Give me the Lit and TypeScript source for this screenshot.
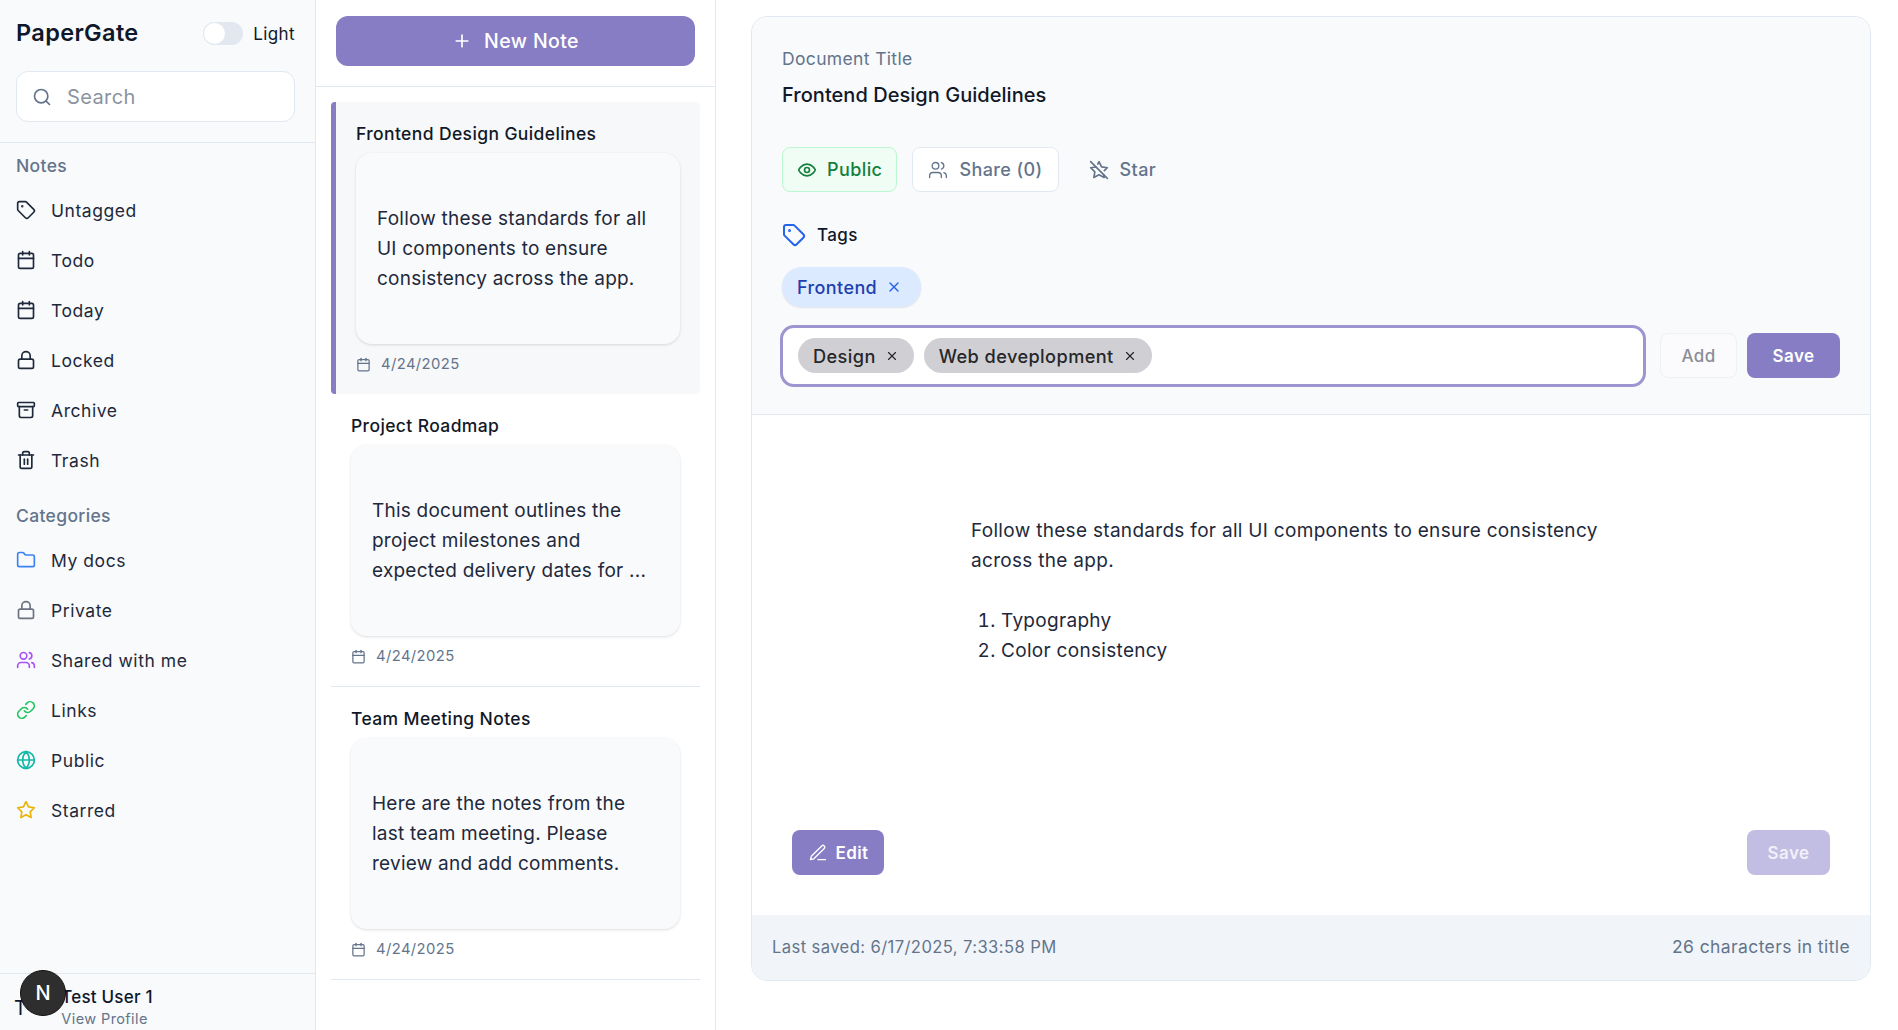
import { LitElement, html, css, svg } from "lit";
import { customElement } from "lit/decorators.js";

// lucide shapes, 24 box
const ICONS: Record<string, unknown> = {
  tag: svg`<path d="M12.586 2.586A2 2 0 0 0 11.172 2H4a2 2 0 0 0-2 2v7.172a2 2 0 0 0 .586 1.414l8.704 8.704a2.426 2.426 0 0 0 3.42 0l6.58-6.58a2.426 2.426 0 0 0 0-3.42z"/><circle cx="7.5" cy="7.5" r=".5" fill="currentColor"/>`,
  calendar: svg`<path d="M8 2v4"/><path d="M16 2v4"/><rect x="3" y="4" width="18" height="18" rx="2"/><path d="M3 10h18"/>`,
  lock: svg`<rect x="3" y="11" width="18" height="11" rx="2"/><path d="M7 11V7a5 5 0 0 1 10 0v4"/>`,
  archive: svg`<rect x="2" y="3" width="20" height="5" rx="1"/><path d="M4 8v11a2 2 0 0 0 2 2h12a2 2 0 0 0 2-2V8"/><path d="M10 12h4"/>`,
  trash: svg`<path d="M3 6h18"/><path d="M19 6v14c0 1-1 2-2 2H7c-1 0-2-1-2-2V6"/><path d="M8 6V4c0-1 1-2 2-2h4c1 0 2 1 2 2v2"/><path d="M10 11v6"/><path d="M14 11v6"/>`,
  folder: svg`<path d="M20 20a2 2 0 0 0 2-2V8a2 2 0 0 0-2-2h-7.9a2 2 0 0 1-1.69-.9L9.6 3.9A2 2 0 0 0 7.93 3H4a2 2 0 0 0-2 2v13a2 2 0 0 0 2 2Z"/>`,
  users: svg`<path d="M16 21v-2a4 4 0 0 0-4-4H6a4 4 0 0 0-4 4v2"/><circle cx="9" cy="7" r="4"/><path d="M22 21v-2a4 4 0 0 0-3-3.87"/><path d="M16 3.13a4 4 0 0 1 0 7.75"/>`,
  link: svg`<path d="M10 13a5 5 0 0 0 7.54.54l3-3a5 5 0 0 0-7.07-7.07l-1.72 1.71"/><path d="M14 11a5 5 0 0 0-7.54-.54l-3 3a5 5 0 0 0 7.07 7.07l1.71-1.71"/>`,
  globe: svg`<circle cx="12" cy="12" r="10"/><path d="M12 2a14.5 14.5 0 0 0 0 20 14.5 14.5 0 0 0 0-20"/><path d="M2 12h20"/>`,
  star: svg`<polygon points="12 2 15.09 8.26 22 9.27 17 14.14 18.18 21.02 12 17.77 5.82 21.02 7 14.14 2 9.27 8.91 8.26 12 2"/>`,
  starOff: svg`<path d="M8.34 8.34 2 9.27l5 4.87L5.82 21 12 17.77 18.18 21l-.59-3.43"/><path d="M18.42 12.76 22 9.27l-6.91-1L12 2l-1.44 2.91"/><path d="M2 2l20 20"/>`,
  eye: svg`<path d="M2 12s3-7 10-7 10 7 10 7-3 7-10 7-10-7-10-7Z"/><circle cx="12" cy="12" r="3"/>`,
  search: svg`<circle cx="11" cy="11" r="8"/><path d="m21 21-4.3-4.3"/>`,
  plus: svg`<path d="M5 12h14"/><path d="M12 5v14"/>`,
  x: svg`<path d="M18 6 6 18"/><path d="m6 6 12 12"/>`,
  pen: svg`<path d="M12 20h9"/><path d="M16.5 3.5a2.12 2.12 0 0 1 3 3L7 19l-4 1 1-4Z"/>`,
};

const icon = (name: string, size = 20, sw = 2) => html`<svg
  class="ic"
  width=${size}
  height=${size}
  viewBox="0 0 24 24"
  fill="none"
  stroke="currentColor"
  stroke-width=${sw}
  stroke-linecap="round"
  stroke-linejoin="round"
>${ICONS[name]}</svg>`;

const NOTE_LINKS = [
  { label: "Untagged", icon: "tag" },
  { label: "Todo", icon: "calendar" },
  { label: "Today", icon: "calendar" },
  { label: "Locked", icon: "lock" },
  { label: "Archive", icon: "archive" },
  { label: "Trash", icon: "trash" },
];

const CATEGORIES = [
  { label: "My docs", icon: "folder", color: "#3b82f6" },
  { label: "Private", icon: "lock", color: "#6b7280" },
  { label: "Shared with me", icon: "users", color: "#a855f7" },
  { label: "Links", icon: "link", color: "#22c55e" },
  { label: "Public", icon: "globe", color: "#14b8a6" },
  { label: "Starred", icon: "star", color: "#eab308" },
];

const NOTES = [
  {
    title: "Frontend Design Guidelines",
    lines: ["Follow these standards for all", "UI components to ensure", "consistency across the app."],
    selected: true,
  },
  {
    title: "Project Roadmap",
    lines: ["This document outlines the", "project milestones and", "expected delivery dates for ..."],
  },
  {
    title: "Team Meeting Notes",
    lines: ["Here are the notes from the", "last team meeting. Please", "review and add comments."],
  },
];

@customElement("app-root")
export class AppRoot extends LitElement {
  static styles = css`
    :host {
      display: flex;
      height: 100vh;
      overflow: hidden;
      background: #fff;
      color: #0f172a;
      font-family: Inter, "Noto Sans", sans-serif;
      letter-spacing: 0.025em;
    }
    .ic {
      display: block;
      flex: none;
    }

    /* sidebar */
    .side {
      width: 315px;
      flex: none;
      display: flex;
      flex-direction: column;
      background: #f8fafc;
      border-right: 1px solid #e2e8f0;
      position: relative;
    }
    .side-top {
      padding: 22px 20px 20px 16px;
      border-bottom: 1px solid #e2e8f0;
    }
    .brand-row {
      display: flex;
      align-items: center;
      height: 23px;
      margin-bottom: 26px;
    }
    .brand {
      font-size: 23.5px;
      font-weight: 600;
      letter-spacing: 0.015em;
      flex: 1;
      padding-bottom: 2px;
    }
    .toggle {
      width: 40px;
      height: 23px;
      border-radius: 12px;
      background: #e2e8f0;
      position: relative;
      margin-right: 10px;
    }
    .toggle::after {
      content: "";
      position: absolute;
      left: 1px;
      top: 1px;
      width: 21px;
      height: 21px;
      border-radius: 50%;
      background: #fff;
    }
    .light {
      font-size: 17px;
    }
    .search {
      height: 51px;
      box-sizing: border-box;
      border: 1px solid #e2e8f0;
      border-radius: 12px;
      background: #fff;
      display: flex;
      align-items: center;
      gap: 15px;
      padding: 0 15px;
      color: #64748b;
      font-size: 20px;
    }
    .search span {
      color: #8b93a1;
    }
    .sec {
      font-size: 17.5px;
      font-weight: 500;
      color: #64748b;
      line-height: 24px;
      padding-left: 16px;
      letter-spacing: 0.02em;
    }
    .sec.notes {
      margin-top: 11px;
      margin-bottom: 7px;
    }
    .sec.cats {
      margin-top: 19px;
      margin-bottom: 7px;
    }
    .nav {
      display: flex;
      align-items: center;
      gap: 15px;
      height: 50px;
      padding-left: 16px;
      font-size: 17.5px;
      letter-spacing: 0.032em;
      color: #1e293b;
    }
    .user {
      margin-top: auto;
      height: 56px;
      border-top: 1px solid #e2e8f0;
      display: flex;
      padding-left: 14px;
      gap: 34px;
    }
    .avatar {
      font-size: 20px;
      line-height: 24px;
      padding-top: 22px;
    }
    .uname {
      font-size: 17px;
      font-weight: 500;
      line-height: 22px;
      margin-top: 12px;
      letter-spacing: 0.012em;
    }
    .uview {
      font-size: 14.5px;
      line-height: 20px;
      color: #64748b;
      margin-top: 1px;
    }
    .devbadge {
      position: absolute;
      left: 20px;
      bottom: 14px;
      width: 46px;
      height: 46px;
      border-radius: 50%;
      background: #2e2e2e;
      border: 1px solid #111;
      box-sizing: border-box;
      color: #fff;
      display: flex;
      align-items: center;
      justify-content: center;
      font-size: 20px;
      font-weight: 500;
      letter-spacing: 0;
    }

    /* note list */
    .list {
      width: 400px;
      flex: none;
      border-right: 1px solid #e2e8f0;
      box-sizing: border-box;
    }
    .list-top {
      padding: 16px 20px 20px 20px;
      height: 87px;
      box-sizing: border-box;
      border-bottom: 1px solid #e2e8f0;
    }
    .new {
      height: 50px;
      width: 359px;
      border-radius: 12px;
      background: #867dc4;
      color: #fff;
      display: flex;
      align-items: center;
      justify-content: center;
      gap: 12px;
      font-size: 19.5px;
      font-weight: 500;
    }
    .notes-col {
      padding: 15px 15px 0;
    }
    .note {
      height: 293px;
      box-sizing: border-box;
      padding: 20px 20px 0;
      border-bottom: 1px solid #e2e8f0;
    }
    .note.sel {
      height: 292px;
      background: #f7f8fa;
      border-bottom: none;
      border-left: 5px solid #867dc4;
      border-radius: 4px;
      padding-bottom: 0;
    }
    .note-title {
      font-size: 17.5px;
      font-weight: 500;
      line-height: 24px;
      letter-spacing: 0.022em;
      color: #111827;
    }
    .preview {
      height: 191px;
      box-sizing: border-box;
      margin-top: 7px;
      border-radius: 16px;
      background: #f9fafb;
      box-shadow: 0 1px 3px rgba(15, 23, 42, 0.14);
      display: flex;
      align-items: center;
      padding: 0 21px;
      font-size: 19px;
      line-height: 30px;
      letter-spacing: 0.012em;
      white-space: nowrap;
      color: #1e293b;
    }
    .date {
      display: flex;
      align-items: center;
      gap: 10px;
      height: 20px;
      margin-top: 10px;
      font-size: 14.8px;
      color: #64748b;
    }

    /* editor */
    .main {
      flex: 1;
      padding: 16px 27px 49px 35px;
      min-width: 0;
    }
    .card {
      height: 100%;
      box-sizing: border-box;
      border: 1px solid #e2e8f0;
      border-radius: 16px;
      overflow: hidden;
      display: flex;
      flex-direction: column;
    }
    .head {
      height: 398px;
      flex: none;
      box-sizing: border-box;
      background: #f8fafc;
      border-bottom: 1px solid #e2e8f0;
      padding: 30px 30px 0 30px;
    }
    .doc-label {
      font-size: 17.5px;
      line-height: 24px;
      color: #64748b;
      letter-spacing: 0.02em;
    }
    .doc-title {
      font-size: 20px;
      font-weight: 500;
      line-height: 30px;
      margin-top: 9px;
      letter-spacing: 0.002em;
      color: #111827;
    }
    .acts {
      display: flex;
      align-items: center;
      margin-top: 37px;
      gap: 15px;
    }
    .act {
      height: 45px;
      box-sizing: border-box;
      display: flex;
      align-items: center;
      gap: 11px;
      border-radius: 8px;
      font-size: 18px;
      font-weight: 500;
      padding: 0 15px;
      border: 1px solid transparent;
      color: #64748b;
    }
    .act.pub {
      gap: 10px;
      padding: 0 14px;
      background: #f0fdf4;
      border-color: #bbf7d0;
      color: #15803d;
    }
    .act.share {
      background: #fff;
      border-color: #e2e8f0;
    }
    .act.starb {
      margin-left: 14px;
      padding: 0;
    }
    .tags-h {
      display: flex;
      align-items: center;
      gap: 11px;
      margin-top: 31px;
      font-size: 17px;
      font-weight: 500;
      height: 24px;
    }
    .tags-h .ic {
      color: #2563eb;
    }
    .chip {
      display: inline-flex;
      align-items: center;
      border-radius: 20px;
      font-weight: 500;
    }
    .chip.blue {
      height: 40px;
      margin-top: 20px;
      padding: 0 19px 0 15px;
      gap: 9px;
      background: #dbeafe;
      color: #1e40af;
      font-size: 18px;
      box-shadow: 0 1px 2px rgba(15, 23, 42, 0.1);
    }
    .chip.blue .ic {
      color: #2563eb;
    }
    .tag-row {
      display: flex;
      align-items: flex-start;
      margin-top: 18px;
      margin-left: -2px;
    }
    .tag-input {
      width: 866px;
      height: 62px;
      box-sizing: border-box;
      border: 3px solid #9c95cf;
      border-radius: 14px;
      background: #fff;
      display: flex;
      align-items: flex-start;
      gap: 10px;
      padding: 10px 15px 0;
      margin-right: 14px;
    }
    .chip.gray {
      height: 35px;
      padding: 0 15px;
      gap: 9px;
      background: #d0d0d4;
      color: #27272a;
      font-size: 18.2px;
    }
    .btn {
      height: 45px;
      box-sizing: border-box;
      border-radius: 8px;
      display: flex;
      align-items: center;
      justify-content: center;
      font-size: 17px;
      font-weight: 600;
    }
    .tag-row .btn {
      margin-top: 8px;
    }
    .btn.add {
      width: 77px;
      background: #fbfbfd;
      border: 1px solid #eef0f4;
      color: #8b8d96;
      font-weight: 500;
      margin-right: 10px;
    }
    .btn.primary {
      width: 93px;
      background: #867dc4;
      color: #fff;
    }
    .body {
      flex: 1;
      display: flex;
      flex-direction: column;
      min-height: 0;
    }
    .doc {
      flex: 1;
      padding: 101px 0 0 219px;
      font-size: 19px;
      line-height: 30px;
      letter-spacing: 0.016em;
      color: #1e293b;
    }
    .doc p {
      margin: 0 0 30px;
      width: 640px;
    }
    .doc ol {
      margin: 0;
      padding-left: 30px;
    }
    .body-acts {
      display: flex;
      justify-content: space-between;
      padding: 0 40px 40px 40px;
    }
    .btn.edit {
      width: 92px;
      gap: 8px;
      background: #867dc4;
      color: #fff;
    }
    .btn.off {
      width: 83px;
      background: #c2bde2;
      color: #f1f0f9;
    }
    .foot {
      height: 65px;
      flex: none;
      box-sizing: border-box;
      background: #f1f5f9;
      display: flex;
      align-items: center;
      justify-content: space-between;
      padding: 0 20px 2px 20px;
      color: #64748b;
    }
    .saved {
      font-size: 16.6px;
    }
    .chars {
      font-size: 17.5px;
    }
  `;

  render() {
    return html`
      <aside class="side">
        <div class="side-top">
          <div class="brand-row">
            <div class="brand">PaperGate</div>
            <div class="toggle"></div>
            <div class="light">Light</div>
          </div>
          <div class="search">${icon("search", 20)}<span>Search</span></div>
        </div>
        <div class="sec notes">Notes</div>
        ${NOTE_LINKS.map((n) => html`<div class="nav">${icon(n.icon, 20)}<span>${n.label}</span></div>`)}
        <div class="sec cats">Categories</div>
        <div class="cat">
          ${CATEGORIES.map(
            (c) => html`<div class="nav">
              <span style="color:${c.color}">${icon(c.icon, 20)}</span><span>${c.label}</span>
            </div>`,
          )}
        </div>
        <div class="user">
          <div class="avatar">T</div>
          <div>
            <div class="uname">Test User 1</div>
            <div class="uview">View Profile</div>
          </div>
        </div>
        <div class="devbadge">N</div>
      </aside>

      <section class="list">
        <div class="list-top">
          <div class="new">${icon("plus", 20)}<span>New Note</span></div>
        </div>
        <div class="notes-col">
          ${NOTES.map(
            (n) => html`<div class="note ${n.selected ? "sel" : ""}">
              <div class="note-title">${n.title}</div>
              <div class="preview"><div>${n.lines.map((l) => html`${l}<br />`)}</div></div>
              <div class="date">${icon("calendar", 15)}<span>4/24/2025</span></div>
            </div>`,
          )}
        </div>
      </section>

      <main class="main">
        <div class="card">
          <div class="head">
            <div class="doc-label">Document Title</div>
            <div class="doc-title">Frontend Design Guidelines</div>
            <div class="acts">
              <div class="act pub">${icon("eye", 20)}<span>Public</span></div>
              <div class="act share">${icon("users", 20, 1.6)}<span>Share (0)</span></div>
              <div class="act starb">${icon("starOff", 20)}<span>Star</span></div>
            </div>
            <div class="tags-h">${icon("tag", 24)}<span>Tags</span></div>
            <div class="chip blue"><span>Frontend</span>${icon("x", 16)}</div>
            <div class="tag-row">
              <div class="tag-input">
                <div class="chip gray"><span>Design</span>${icon("x", 14)}</div>
                <div class="chip gray"><span>Web deveplopment</span>${icon("x", 14)}</div>
              </div>
              <div class="btn add">Add</div>
              <div class="btn primary">Save</div>
            </div>
          </div>
          <div class="body">
            <div class="doc">
              <p>Follow these standards for all UI components to ensure consistency across the app.</p>
              <ol>
                <li>Typography</li>
                <li>Color consistency</li>
              </ol>
            </div>
            <div class="body-acts">
              <div class="btn edit">${icon("pen", 20, 1.6)}<span>Edit</span></div>
              <div class="btn off">Save</div>
            </div>
          </div>
          <div class="foot">
            <span class="saved">Last saved: 6/17/2025, 7:33:58 PM</span>
            <span class="chars">26 characters in title</span>
          </div>
        </div>
      </main>
    `;
  }
}
